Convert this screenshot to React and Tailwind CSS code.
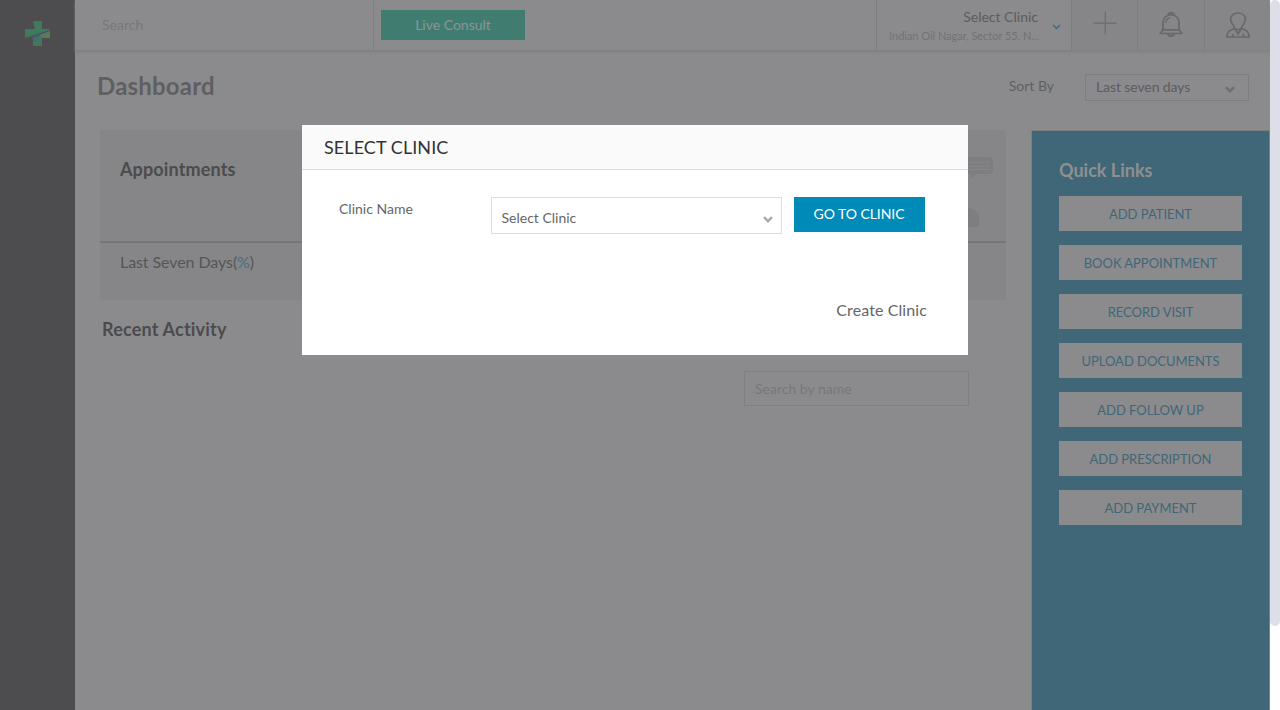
const quickLinks = [
  'ADD PATIENT',
  'BOOK APPOINTMENT',
  'RECORD VISIT',
  'UPLOAD DOCUMENTS',
  'ADD FOLLOW UP',
  'ADD PRESCRIPTION',
  'ADD PAYMENT',
];

function Chevron({ className }) {
  return (
    <svg viewBox="0 0 10 7" className={className} fill="none" stroke="currentColor">
      <path d="M1 1.200l4 4 4-4" />
    </svg>
  );
}

function Logo() {
  return (
    <svg viewBox="0 0 25 25" className="h-[25px] w-[25px]">
      <path d="M0 8h10L8 0h9v8h8v1L11 14 0 17z" fill="#407a5c" />
      <path d="M25 10v7h-8l-4-3z" fill="#587a5a" />
      <path d="M8 15l6-2 3 4v8H8z" fill="#417660" />
      <path d="M25 9L12 13 0 17h9l6-3z" fill="#46566a" />
      <path d="M8 16.500l6-2 1 4-7 1.500z" fill="#456c72" />
    </svg>
  );
}

function PlusIcon() {
  return (
    <svg viewBox="0 0 24 24" className="h-6 w-6" stroke="#6f6f71" strokeWidth="1.4">
      <path d="M12.300 0.500v23M0.500 12.300h23" />
    </svg>
  );
}

function BellIcon() {
  return (
    <svg viewBox="0 0 24 26" className="h-[26px] w-6" fill="none" stroke="#68686a" strokeWidth="1.7" strokeLinejoin="round">
      <path d="M9.300 2.800C9.300 0 14.700 0 14.700 2.800" />
      <path d="M4 17.500V10.500a8 7.800 0 0 1 16 0v7l2.800 4H1.200z" />
      <path d="M4 17.800h16M8.800 21.800a3.300 3 0 0 0 6.400 0M6.800 10.500a5 4.500 0 0 1 4.500-4.500" />
    </svg>
  );
}

function UserIcon() {
  return (
    <svg viewBox="0 0 24 26" className="h-[26px] w-6" fill="none" stroke="#68686a" strokeWidth="1.7" strokeLinejoin="round">
      <path d="M12 1C7.500 1 4.600 3.700 4.600 7.200c0 3 2.400 5.300 4 8.800q3.400 3.500 6.800 0c1.600-3.500 4-5.800 4-8.800C19.400 3.700 16.500 1 12 1z" />
      <path d="M8.700 16.500C3.500 17.800.8 20 .8 25h22.400c0-5-2.700-7.200-7.900-8.500M8.700 16.500L12 22l3.300-5.500M6.700 21.800V25M17.300 21.800V25" />
    </svg>
  );
}

function Header() {
  return (
    <header className="flex h-[52px] shrink-0 border-b-2 border-[#828284] shadow-[0_1px_2px_#858587]">
      <div className="flex w-[299px] items-center border-r border-[#808084] pl-[27px]">
        <span className="text-[14px] leading-5 text-[#777779]">Search</span>
      </div>
      <div className="flex flex-1 pl-[7px] pt-[10px]">
        <button className="h-[30px] w-[144px] bg-[#407d70] text-[14px] leading-[30px] text-[#8b9593]">Live Consult</button>
      </div>
      <div className="flex w-[195px] border-l border-[#7e7e80]">
        <div className="flex w-[161px] flex-col items-end pt-[7px]">
          <span className="text-[14px] leading-5 text-[#5c5c5e]">Select Clinic</span>
          <span className="-mr-px pt-[1px] text-[11px] leading-4 tracking-[-0.03px] text-[#727274]">Indian Oil Nagar, Sector 55, N...</span>
        </div>
        <Chevron className="ml-[14px] mt-[24px] h-[6px] w-[9px] stroke-[1.8] text-[#366e84]" />
      </div>
      <div className="flex bg-[#868688]">
        <div className="flex w-[66px] justify-center border-l border-[#7e7e80] pl-px pt-[11px]"><PlusIcon /></div>
        <div className="flex w-[67px] justify-center border-l border-[#7e7e80] pt-[12px]"><BellIcon /></div>
        <div className="flex w-[66px] justify-center border-l border-[#7e7e80] pt-[12px]"><UserIcon /></div>
      </div>
    </header>
  );
}

function Appointments() {
  return (
    <section className="flex h-[170px] flex-col bg-[#868688]">
      <div className="flex h-[113px] justify-between border-b-2 border-[#767678] pb-[14px] pl-5 pr-[13px] pt-[26px]">
        <h2 className="text-[18px] font-bold leading-[26px] tracking-[0.14px] text-[#4b4b4d]">Appointments</h2>
        <div className="flex flex-col items-end justify-between">
          <svg viewBox="0 0 34 24" className="h-6 w-[34px]" fill="#7e7e80">
            <path d="M3 1h27q4 0 4 4v9q0 4-4 4H17l-5 5v-5H3z" />
            <path d="M5 6.500h26M5 10h26M5 13.500h26" stroke="#858587" />
          </svg>
          <svg viewBox="0 0 30 20" className="mr-[14px] h-5 w-[30px]" fill="#7e7e80">
            <path d="M0 8L15 0q15 3 15 10v8q0 2-2 2H0z" />
          </svg>
        </div>
      </div>
      <p className="pl-5 pt-[7px] text-[16px] leading-6 tracking-[-0.08px] text-[#555557]">
        Last Seven Days(<span className="text-[#3e7087]">%</span>)
      </p>
    </section>
  );
}

function QuickLinks() {
  return (
    <aside className="mt-[10px] flex w-[239px] flex-col border-x border-t border-[#7d7f81] bg-[#3f6777] pl-[27px] pt-[26px]">
      <h2 className="text-[18px] font-bold leading-[26px] text-[#8f8f91]">Quick Links</h2>
      <div className="flex flex-col gap-[14px] pt-[13px]">
        {quickLinks.map((label) => (
          <button key={label} className="h-[35px] w-[183px] bg-[#8b8b8d] text-[13px] leading-[37px] tracking-[-0.03px] text-[#3f6777]">{label}</button>
        ))}
      </div>
    </aside>
  );
}

function ClinicDialog() {
  return (
    <div role="dialog" className="absolute left-[302px] top-[125px] flex h-[230px] w-[666px] flex-col bg-white">
      <h2 className="h-[45px] border-b border-[#dddddd] bg-[#fafafa] pl-[22px] text-[18px] leading-[45px] tracking-[0.08px] text-[#333333]">SELECT CLINIC</h2>
      <div className="flex pl-[37px] pt-[27px]">
        <span className="w-[152px] pt-[2px] text-[14px] leading-5 text-[#666666]">Clinic Name</span>
        <div className="flex h-[37px] w-[291px] justify-between border border-[#dddddd] pl-[9.5px] pr-[8px]">
          <span className="pt-[10px] text-[14px] leading-5 text-[#666666]">Select Clinic</span>
          <Chevron className="mt-[18px] h-[7px] w-[10px] stroke-[2.5] text-[#aaaaaa]" />
        </div>
        <button className="ml-3 h-[35px] w-[131px] bg-[#008ab8] pb-px pr-px text-[14px] leading-[34px] tracking-[-0.06px] text-white">GO TO CLINIC</button>
      </div>
      <a className="mr-[41px] mt-[64px] self-end text-[16px] leading-6 tracking-[0.1px] text-[#666666]">Create Clinic</a>
    </div>
  );
}

export default function App() {
  return (
    <div className="relative flex h-[710px] w-[1280px] overflow-hidden bg-[#8b8b8d] font-['Lato',sans-serif] [font-variant-ligatures:none]">
      <nav className="flex w-[75px] shrink-0 justify-center bg-[#4d4d4f] pt-[21px]"><Logo /></nav>
      <div className="flex w-[1195px] flex-col">
        <Header />
        <div className="flex h-[68px] shrink-0 pl-[22px] pr-[21px]">
          <h1 className="flex-1 pt-[18px] text-[24px] font-bold leading-8 tracking-[0.2px] text-[#5f5f61]">Dashboard</h1>
          <span className="mr-[31px] pt-[24px] text-[14px] leading-5 text-[#5f5f61]">Sort By</span>
          <div className="mt-[22px] flex h-[27px] w-[164px] justify-between border border-[#7e7e80] pl-[10px] pr-[13px]">
            <span className="pt-[2px] text-[14px] leading-5 tracking-[-0.1px] text-[#5c5c5e]">Last seven days</span>
            <Chevron className="mt-[11px] h-[7px] w-[10px] stroke-[2.5] text-[#6f6f71]" />
          </div>
        </div>
        <main className="flex flex-1">
          <div className="flex w-[956px] flex-col pl-[25px] pr-[25px] pt-[10px]">
            <Appointments />
            <h2 className="pl-[2px] pt-4 text-[18px] font-bold leading-[26px] tracking-[0.2px] text-[#4b4b4d]">Recent Activity</h2>
            <div className="mr-[37px] mt-[29px] h-[35px] w-[225px] self-end border border-[#808082] pl-[10px] text-[14px] leading-[33px] text-[#777779]">Search by name</div>
          </div>
          <QuickLinks />
        </main>
      </div>
      <div className="w-[10px] bg-white"><div className="h-[626px] rounded-full bg-[#dedee8]" /></div>
      <ClinicDialog />
    </div>
  );
}
